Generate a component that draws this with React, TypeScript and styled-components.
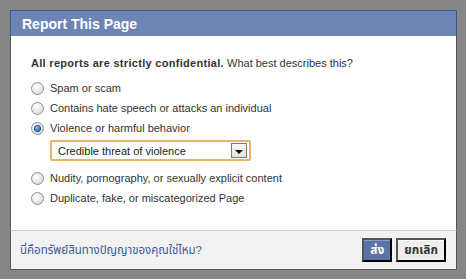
import React, { useState } from 'react';
import styled, { createGlobalStyle } from 'styled-components';

const GlobalStyle = createGlobalStyle`
  html, body {
    margin: 0;
    padding: 0;
    background: #868686;
  }
  body {
    font-family: "Liberation Sans", Tahoma, "Noto Sans Thai", "DejaVu Sans", sans-serif;
    font-size: 11px;
    color: #333;
  }
`;

const Backdrop = styled.div`
  width: 466px;
  height: 279px;
  box-sizing: border-box;
  padding: 10px 9px 9px 10px;
  background: #868686;
`;

const Dialog = styled.div`
  width: 447px;
  height: 260px;
  display: flex;
  flex-direction: column;
  background: #fff;
`;

const Header = styled.div`
  height: 26px;
  box-sizing: border-box;
  display: flex;
  align-items: center;
  padding: 0 11px;
  background: #6d84b4;
  border: 1px solid #3b5998;
  border-bottom: none;
`;

const Title = styled.h2`
  margin: 0;
  font-size: 14px;
  font-weight: bold;
  color: #fff;
`;

const Body = styled.div`
  flex: 1;
  padding: 20px 20px 0;
  border-left: 1px solid #555;
  border-right: 1px solid #555;
`;

const Intro = styled.div`
  line-height: 14px;
  margin-bottom: 8px;
  color: #333;

  b {
    font-weight: bold;
    letter-spacing: 0.3px;
  }
`;

const OptionRow = styled.label`
  display: flex;
  align-items: center;
  height: 20px;
  gap: 6px;
  cursor: pointer;
  color: #333;
`;

const Radio = styled.span<{ $checked: boolean }>`
  width: 13px;
  height: 13px;
  box-sizing: border-box;
  border-radius: 50%;
  border: 1px solid #8f8f8f;
  background: radial-gradient(circle at 40% 35%, #ffffff 0%, #e6e6e6 55%, #cfcfcf 100%);
  display: flex;
  align-items: center;
  justify-content: center;
  flex-shrink: 0;

  &::after {
    content: '';
    display: ${p => (p.$checked ? 'block' : 'none')};
    width: 5px;
    height: 5px;
    border-radius: 50%;
    background: radial-gradient(circle at 40% 35%, #8fd0ff 0%, #2a7fd0 50%, #0d3f80 100%);
    box-shadow: 0 0 0 1px #1c4e8a;
  }
`;

const SelectBox = styled.div`
  width: 201px;
  height: 21px;
  box-sizing: border-box;
  margin: 2px 0 7px 19px;
  border: 2px solid #e6b664;
  border-radius: 2px;
  background: #fff;
  display: flex;
  align-items: center;
  justify-content: space-between;
  padding: 0 2px 0 6px;
  font-size: 11px;
  color: #222;
`;

const DropButton = styled.span`
  width: 16px;
  height: 15px;
  box-sizing: border-box;
  border: 1px solid #7a7a7a;
  background: linear-gradient(#f8f8f8, #e2e2e2);
  display: flex;
  align-items: center;
  justify-content: center;

  &::after {
    content: '';
    border-left: 4px solid transparent;
    border-right: 4px solid transparent;
    border-top: 4px solid #111;
    margin-top: 2px;
  }
`;

const Footer = styled.div`
  height: 40px;
  box-sizing: border-box;
  display: flex;
  align-items: center;
  justify-content: space-between;
  padding: 0 10px 0 9px;
  background: #f2f2f2;
  border: 1px solid #555;
  border-top: 1px solid #ccc;
`;

const FooterLink = styled.a`
  color: #3b5998;
  text-decoration: none;
  font-size: 11.5px;
  cursor: pointer;
`;

const Buttons = styled.div`
  display: flex;
  gap: 4px;
`;

const Button = styled.button<{ $primary?: boolean }>`
  height: 24px;
  box-sizing: border-box;
  padding: 0 6px;
  font-family: inherit;
  font-size: 12px;
  font-weight: bold;
  cursor: pointer;
  color: ${p => (p.$primary ? '#fff' : '#333')};
  background: ${p => (p.$primary ? '#5b74a8' : '#eeeeee')};
  border: 1px solid ${p => (p.$primary ? '#29447e #29447e #1a356e' : '#999 #999 #888')};
  box-shadow: ${p => (p.$primary ? 'inset 0 1px 0 #8a9cc2' : 'inset 0 1px 0 #fff')};
`;

const options = [
  'Spam or scam',
  'Contains hate speech or attacks an individual',
  'Violence or harmful behavior',
  'Nudity, pornography, or sexually explicit content',
  'Duplicate, fake, or miscategorized Page',
];

const App: React.FC = () => {
  const [selected, setSelected] = useState(2);

  return (
    <>
      <GlobalStyle />
      <Backdrop>
        <Dialog>
          <Header>
            <Title>Report This Page</Title>
          </Header>
          <Body>
            <Intro>
              <b>All reports are strictly confidential.</b> What best describes this?
            </Intro>
            {options.map((opt, i) => (
              <React.Fragment key={opt}>
                <OptionRow onClick={() => setSelected(i)}>
                  <Radio $checked={selected === i} />
                  {opt}
                </OptionRow>
                {i === 2 && selected === 2 && (
                  <SelectBox>
                    Credible threat of violence
                    <DropButton />
                  </SelectBox>
                )}
              </React.Fragment>
            ))}
          </Body>
          <Footer>
            <FooterLink>นี่คือทรัพย์สินทางปัญญาของคุณใช่ไหม?</FooterLink>
            <Buttons>
              <Button $primary>ส่ง</Button>
              <Button>ยกเลิก</Button>
            </Buttons>
          </Footer>
        </Dialog>
      </Backdrop>
    </>
  );
};

export default App;
